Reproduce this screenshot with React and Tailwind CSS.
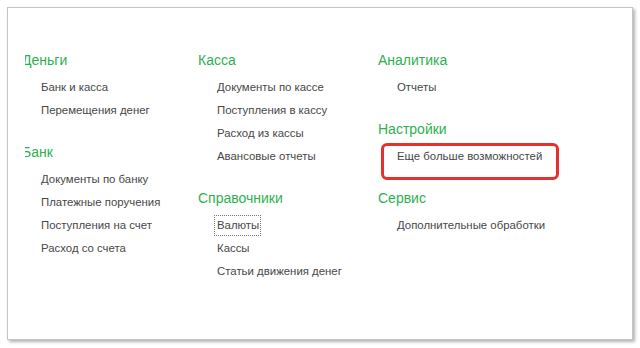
const groups = [
  [
    { title: "Деньги", items: ["Банк и касса", "Перемещения денег"] },
    { title: "Банк", items: ["Документы по банку", "Платежные поручения", "Поступления на счет", "Расход со счета"] },
  ],
  [
    { title: "Касса", items: ["Документы по кассе", "Поступления в кассу", "Расход из кассы", "Авансовые отчеты"] },
    { title: "Справочники", items: ["Валюты", "Кассы", "Статьи движения денег"], focused: "Валюты" },
  ],
  [
    { title: "Аналитика", items: ["Отчеты"] },
    { title: "Настройки", items: ["Еще больше возможностей"], marked: "Еще больше возможностей" },
    { title: "Сервис", items: ["Дополнительные обработки"] },
  ],
];

function Group({ group }) {
  return (
    <div className="mb-[15px]">
      <div className="h-[31px] flex items-center text-[14px] text-[#2fb04f] whitespace-nowrap">
        {group.title}
      </div>
      {group.items.map((item) => (
        <div key={item} className="relative h-[23px] flex items-center pl-[19px] text-[11.4px] text-[#474747] whitespace-nowrap">
          {item === group.focused ? (
            <span className="-ml-[3px] pl-[2px] pr-[1px] py-[1px] border border-dotted border-[#777]">{item}</span>
          ) : (
            item
          )}
          {item === group.marked && (
            <div className="absolute left-[3px] top-[-2px] w-[178px] h-[37px] border-[3px] border-[#e5302e] rounded-[6px]" />
          )}
        </div>
      ))}
    </div>
  );
}

export default function App() {
  return (
    <main className="w-[640px] h-[348px] bg-white pt-[7px] pl-[7px]" style={{ fontFamily: '"Liberation Sans", Arial, sans-serif' }}>
      <section className="w-[626px] h-[333px] bg-white border border-[#c4c4c4] shadow-[2px_2px_3px_rgba(0,0,0,0.3)] pt-[37px] pl-[17px]">
        <div className="flex overflow-hidden h-full">
          <div className="w-[176px] shrink-0 -ml-[3px]">
            {groups[0].map((g) => <Group key={g.title} group={g} />)}
          </div>
          <div className="w-[180px] shrink-0">
            {groups[1].map((g) => <Group key={g.title} group={g} />)}
          </div>
          <div className="flex-1">
            {groups[2].map((g) => <Group key={g.title} group={g} />)}
          </div>
        </div>
      </section>
    </main>
  );
}
